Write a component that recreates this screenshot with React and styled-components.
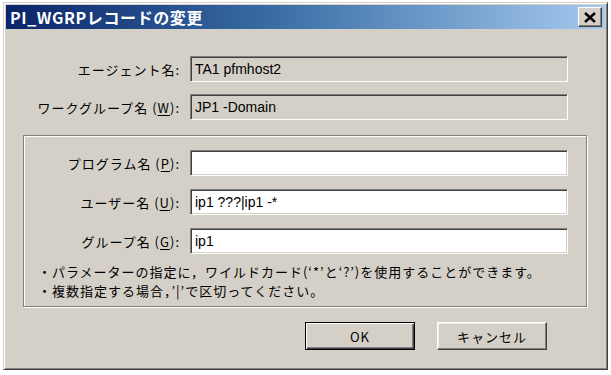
import React from "react";
import styled, { createGlobalStyle } from "styled-components";

const Global = createGlobalStyle`
  html, body { margin: 0; padding: 0; background: #ffffff; }
  body { font-family: "Noto Sans CJK JP", "Liberation Sans", sans-serif; }
`;

const Window = styled.div`
  box-sizing: border-box;
  margin: 2px 0 0 3px;
  width: 605px;
  height: 368px;
  padding: 2px;
  background: #d4d0c8;
  border: 1px solid;
  border-color: #d4d0c8 #404040 #404040 #d4d0c8;
  box-shadow: inset 1px 1px 0 #ffffff, inset -1px -1px 0 #808080;
  display: flex;
  flex-direction: column;
`;

const TitleBar = styled.div`
  height: 24px;
  display: flex;
  align-items: center;
  justify-content: space-between;
  padding: 0 3px 0 4px;
  background: linear-gradient(to right, #0a246a 0%, #3a6ea5 45%, #a6caf0 100%);
`;

const Title = styled.span`
  color: #ffffff;
  font-family: "Noto Sans CJK JP", sans-serif;
  font-weight: 700;
  font-size: 16px;
  line-height: 24px;
  letter-spacing: 0.6px;
`;

const CloseButton = styled.div`
  box-sizing: border-box;
  width: 24px;
  height: 20px;
  background: #d4d0c8;
  border: 1px solid;
  border-color: #ffffff #404040 #404040 #ffffff;
  box-shadow: inset -1px -1px 0 #808080;
  display: flex;
  align-items: center;
  justify-content: center;
`;

const Body = styled.div`
  flex: 1;
  display: flex;
  flex-direction: column;
  padding: 27px 18px 0 17px;
`;

const Rows = styled.div`
  display: flex;
  flex-direction: column;
  gap: ${(p) => p.$gap}px;
  padding-right: ${(p) => p.$right}px;
`;

const Row = styled.div`
  display: grid;
  grid-template-columns: auto 378px;
  justify-content: end;
  align-items: center;
  column-gap: 10px;
`;

const Label = styled.span`
  font-size: 13px;
  color: #000000;
  text-align: right;
  white-space: nowrap;
  letter-spacing: 1px;
`;

const Key = styled.span`
  text-decoration: underline;
  text-underline-offset: 2px;
`;

const Field = styled.div`
  box-sizing: border-box;
  height: 26px;
  padding: 0 4px;
  display: flex;
  align-items: center;
  background: ${(p) => (p.$readOnly ? "#d4d0c8" : "#ffffff")};
  border: 1px solid;
  border-color: #808080 #ffffff #ffffff #808080;
  box-shadow: inset 1px 1px 0 #404040, inset -1px -1px 0 #d4d0c8;
  font-family: "Liberation Sans", "Noto Sans CJK JP", sans-serif;
  font-size: 14px;
  color: #000000;
  white-space: pre;
`;

const GroupBox = styled.div`
  margin-top: 15px;
  border: 1px solid #808080;
  box-shadow: inset 1px 1px 0 #ffffff, 1px 1px 0 #ffffff;
  padding: 14px 0 6px 0;
  display: flex;
  flex-direction: column;
`;

const Notes = styled.div`
  margin-top: 8px;
  padding-left: 14px;
  font-size: 13px;
  line-height: 19px;
  color: #000000;
  letter-spacing: 1px;
  white-space: nowrap;
`;

const ButtonRow = styled.div`
  margin-top: 15px;
  display: flex;
  justify-content: flex-end;
  gap: 22px;
  padding-right: 40px;
`;

const Button = styled.div`
  box-sizing: border-box;
  width: 110px;
  height: 28px;
  display: flex;
  align-items: center;
  justify-content: center;
  font-size: 13px;
  color: #000000;
  background: #d4d0c8;
  border: 1px solid;
  border-color: ${(p) =>
    p.$default ? "#000000" : "#ffffff #404040 #404040 #ffffff"};
  box-shadow: ${(p) =>
    p.$default
      ? "inset 1px 1px 0 #ffffff, inset -1px -1px 0 #404040, inset -2px -2px 0 #808080"
      : "inset -1px -1px 0 #808080, inset 1px 1px 0 #ececec"};
  letter-spacing: 1px;
`;

const CloseIcon = () => (
  <svg width="12" height="11" viewBox="0 0 12 11">
    <path d="M1 1 L11 10 M11 1 L1 10" stroke="#000" strokeWidth="2.4" />
  </svg>
);

export default function App() {
  return (
    <>
      <Global />
      <Window>
        <TitleBar>
          <Title>PI_WGRPレコードの変更</Title>
          <CloseButton>
            <CloseIcon />
          </CloseButton>
        </TitleBar>
        <Body>
          <Rows $gap={12} $right={19}>
            <Row>
              <Label>エージェント名:</Label>
              <Field $readOnly>TA1 pfmhost2</Field>
            </Row>
            <Row>
              <Label>
                ワークグループ名 (<Key>W</Key>):
              </Label>
              <Field $readOnly>JP1 -Domain</Field>
            </Row>
          </Rows>
          <GroupBox>
            <Rows $gap={13} $right={18}>
              <Row>
                <Label>
                  プログラム名 (<Key>P</Key>):
                </Label>
                <Field />
              </Row>
              <Row>
                <Label>
                  ユーザー名 (<Key>U</Key>):
                </Label>
                <Field>ip1 ???|ip1 -*</Field>
              </Row>
              <Row>
                <Label>
                  グループ名 (<Key>G</Key>):
                </Label>
                <Field>ip1</Field>
              </Row>
            </Rows>
            <Notes>
              <div>・パラメーターの指定に，ワイルドカード(‘*’と‘?’)を使用することができます。</div>
              <div>・複数指定する場合，’|’で区切ってください。</div>
            </Notes>
          </GroupBox>
          <ButtonRow>
            <Button $default>OK</Button>
            <Button>キャンセル</Button>
          </ButtonRow>
        </Body>
      </Window>
    </>
  );
}
